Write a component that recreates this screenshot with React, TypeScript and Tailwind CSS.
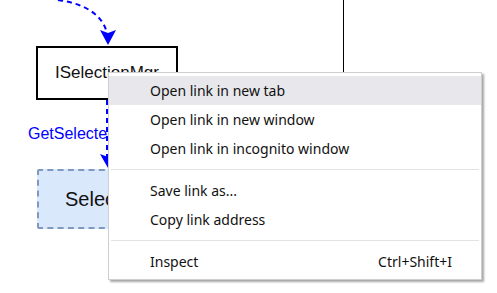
import React from "react";

const items1 = ["Open link in new tab", "Open link in new window", "Open link in incognito window"];
const items2 = ["Save link as...", "Copy link address"];

function Row({ label, active, shortcut }: { label: string; active?: boolean; shortcut?: string }) {
  return (
    <div
      className={`flex h-[29px] items-center justify-between pl-[41px] pr-[29px] ${active ? "bg-[#e8e8ec]" : ""}`}
    >
      <span>{label}</span>
      {shortcut && <span>{shortcut}</span>}
    </div>
  );
}

function Separator() {
  return <div className="mx-[2px] my-[6px] h-px bg-[#e3e3e3]" />;
}

export default function App() {
  return (
    <div className="relative h-[293px] w-[497px] overflow-hidden bg-white" style={{ fontFamily: '"Liberation Sans", Arial, sans-serif' }}>
      <svg className="absolute left-0 top-0" width="497" height="293">
        <path d="M58 0 Q100 6 107 33" fill="none" stroke="#0000ff" strokeWidth="2" strokeDasharray="5 4" />
        <polygon points="100,30 108,33 116,30 108,45" fill="#0000ff" />
        <line x1="343.5" y1="0" x2="343.5" y2="72" stroke="#000" strokeWidth="1" />
        <line x1="107" y1="100" x2="107" y2="158" stroke="#0000ff" strokeWidth="2" strokeDasharray="5 4" />
        <polygon points="100,154 108,157 116,154 108,168" fill="#0000ff" />
      </svg>
      <div className="absolute left-[36px] top-[46px] flex h-[54px] w-[142px] items-center justify-center border-2 border-black bg-white text-[17px] text-[#111]">
        ISelectionMgr
      </div>
      <div className="absolute left-[28px] top-[122px] text-[16px] text-[#0000ff]">GetSelectedObject</div>
      <div className="absolute left-[37px] top-[169px] flex h-[60px] w-[140px] items-center rounded-[2px] border-2 border-dashed border-[#7f98bf] bg-[#dae8fc] pl-[26px] text-[20px] text-[#111]">
        Selection
      </div>

      <div
        className="absolute left-[108px] top-[72px] w-[374px] border border-[#cfcfcf] bg-white py-[3px] text-[14px] text-[#111] shadow-[2px_2px_2px_rgba(0,0,0,0.35)]"
        style={{ fontFamily: '"Noto Sans", "Open Sans", sans-serif' }}
      >
        {items1.map((t, i) => (
          <Row key={t} label={t} active={i === 0} />
        ))}
        <Separator />
        {items2.map((t) => (
          <Row key={t} label={t} />
        ))}
        <Separator />
        <Row label="Inspect" shortcut="Ctrl+Shift+I" />
      </div>
    </div>
  );
}
